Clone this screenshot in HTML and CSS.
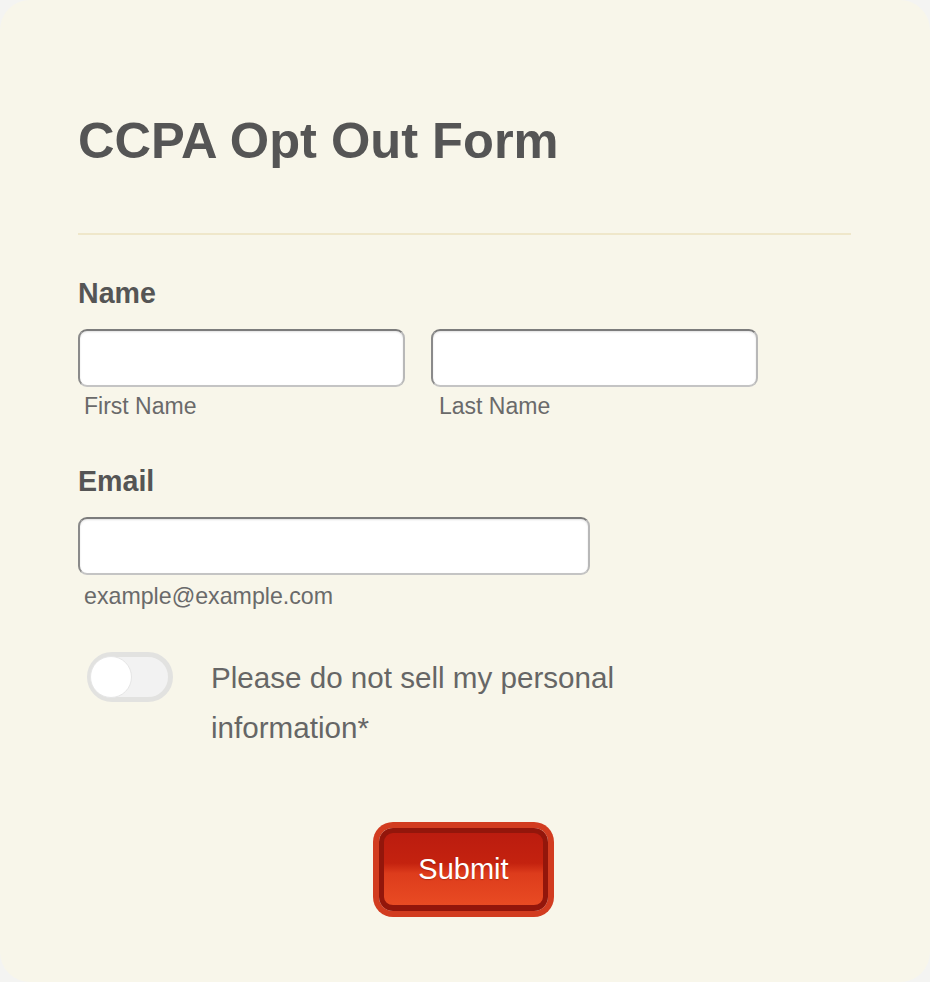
FILE: index.html
```html
<!DOCTYPE html>
<html lang="en">
<head>
<meta charset="utf-8">
<title>CCPA Opt Out Form</title>
<link rel="stylesheet" href="styles.css">
</head>
<body>
<form class="card">
  <h1 class="title">CCPA Opt Out Form</h1>
  <hr class="divider">

  <div class="field">
    <label class="label">Name</label>
    <div class="name-row">
      <div class="sub">
        <input class="input" type="text">
        <span class="hint">First Name</span>
      </div>
      <div class="sub">
        <input class="input" type="text">
        <span class="hint">Last Name</span>
      </div>
    </div>
  </div>

  <div class="field field-email">
    <label class="label">Email</label>
    <div class="sub">
      <input class="input input-email" type="email">
      <span class="hint">example@example.com</span>
    </div>
  </div>

  <div class="toggle-row">
    <span class="toggle"><span class="knob"></span></span>
    <span class="toggle-text">Please do not sell my personal information*</span>
  </div>

  <div class="actions">
    <button class="submit" type="button">Submit</button>
  </div>
</form>
</body>
</html>
```

FILE: styles.css
```css
html, body {
  margin: 0;
  padding: 0;
}
body {
  background: #f4f4f2;
  font-family: "Liberation Sans", Arial, sans-serif;
  width: 930px;
  height: 982px;
}
.card {
  box-sizing: border-box;
  width: 930px;
  height: 982px;
  background: #f8f6ea;
  border-radius: 30px;
  padding: 111px 79px 0 78px;
  display: flex;
  flex-direction: column;
}
.title {
  margin: 0;
  font-size: 50.6px;
  line-height: 60px;
  font-weight: bold;
  color: #555555;
}
.divider {
  margin: 62px 0 0 0;
  border: 0;
  height: 2px;
  background: #efe7ca;
}
.field {
  margin-top: 41px;
  display: flex;
  flex-direction: column;
}
.field-email {
  margin-top: 45px;
}
.label {
  font-size: 28.6px;
  line-height: 34px;
  font-weight: bold;
  color: #555555;
  margin-bottom: 19px;
}
.name-row {
  display: grid;
  grid-template-columns: 327px 327px;
  gap: 26px;
}
.sub {
  display: flex;
  flex-direction: column;
}
.input {
  box-sizing: border-box;
  width: 327px;
  height: 58px;
  margin: 0;
  border: 2px solid #9a9a9a;
  border-top-color: #7c7c7c;
  border-left-color: #8a8a8a;
  border-right-color: #b8b8b8;
  border-bottom-color: #c4c4c4;
  border-radius: 9px;
  background: #ffffff;
  box-shadow: inset 0 1px 2px rgba(0,0,0,0.12);
}
.input-email {
  width: 512px;
}
.hint {
  margin-top: 6px;
  padding-left: 6px;
  font-size: 23px;
  line-height: 26px;
  color: #6a6a6a;
}
.name-row .sub + .sub .hint {
  padding-left: 8px;
}
.field-email .hint {
  margin-top: 8px;
  font-size: 23.2px;
}
.toggle-row {
  margin-top: 43px;
  display: flex;
  align-items: flex-start;
  gap: 38px;
  padding-left: 9px;
}
.toggle {
  box-sizing: border-box;
  flex: none;
  width: 86px;
  height: 50px;
  border: 5px solid #e2e2e0;
  border-radius: 25px;
  background: #f2f2f2;
  display: flex;
  align-items: center;
}
.knob {
  box-sizing: border-box;
  width: 42px;
  height: 42px;
  margin-left: -2px;
  border-radius: 50%;
  background: #ffffff;
  border: 1px solid #e6e6e6;
}
.toggle-text {
  margin-top: 1px;
  width: 440px;
  font-size: 29.6px;
  line-height: 50px;
  color: #666666;
}
.actions {
  margin-top: 75px;
  display: flex;
  justify-content: center;
}
.submit {
  box-sizing: border-box;
  width: 169px;
  height: 83px;
  margin-left: -2px;
  border: 5px solid #93160b;
  border-bottom-width: 6px;
  border-radius: 14px;
  box-shadow: 0 0 0 6px #d23c20;
  background: linear-gradient(#bb1c0f 0%, #c4220f 42%, #dd3c1c 56%, #e94b23 100%);
  color: #ffffff;
  font-family: "Liberation Sans", Arial, sans-serif;
  font-size: 29px;
  padding: 0;
  text-shadow: 0 1px 1px rgba(120,20,0,0.4);
}
```
